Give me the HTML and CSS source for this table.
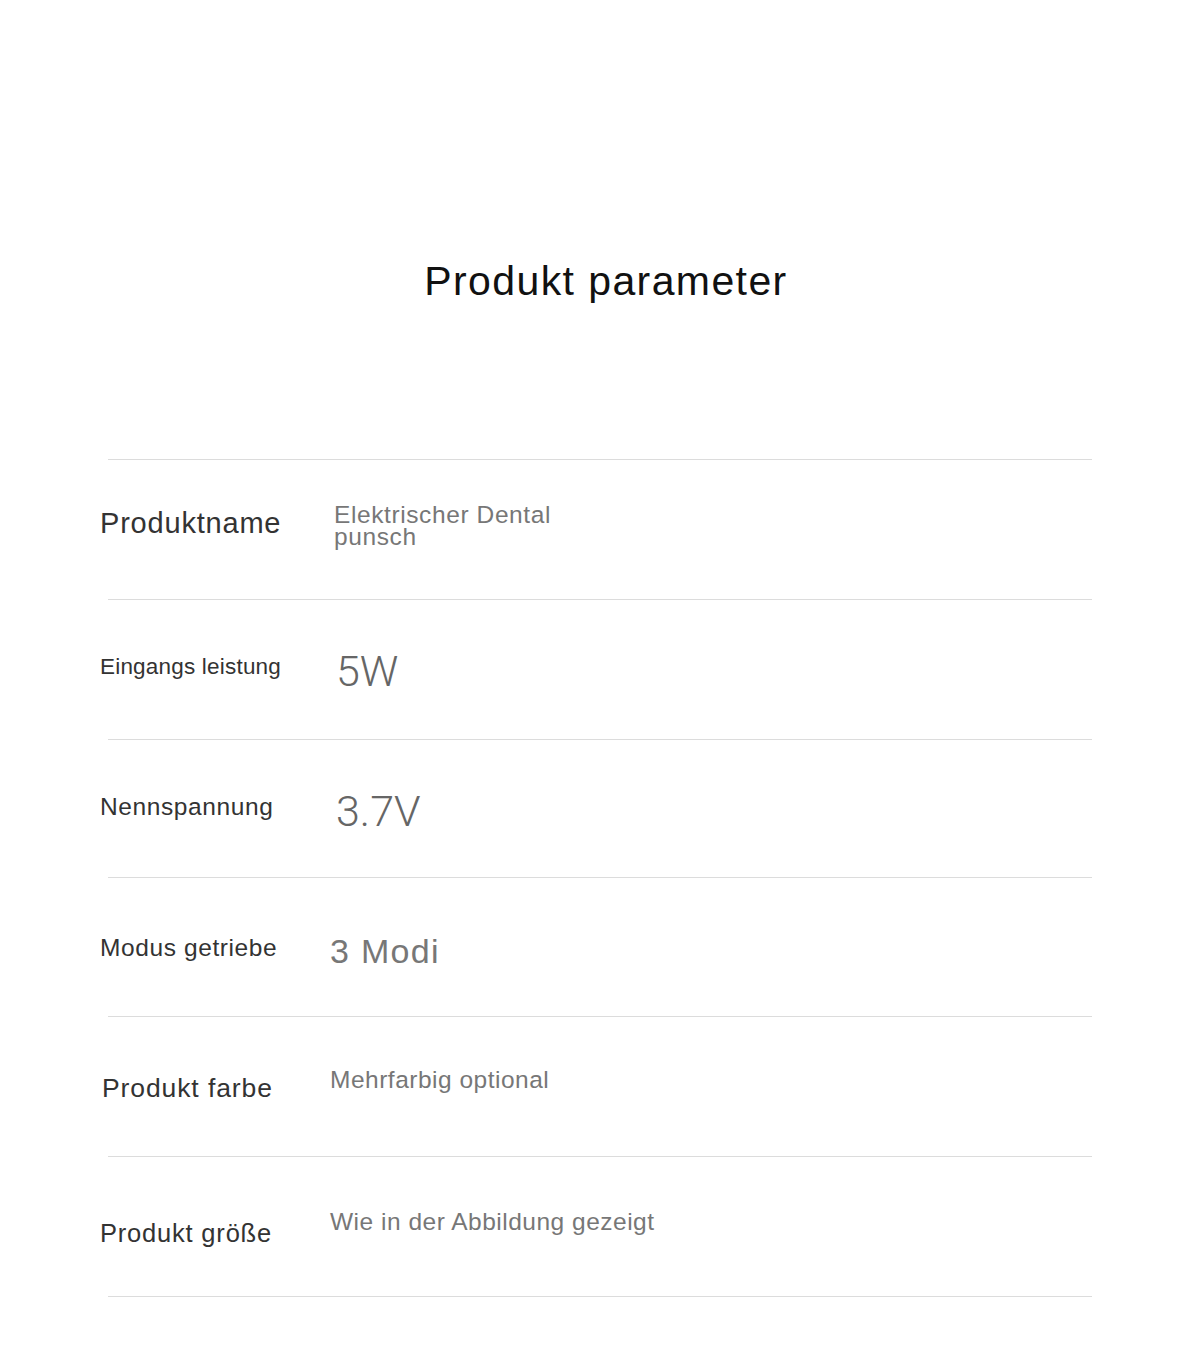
FILE: index.html
```html
<!DOCTYPE html>
<html lang="de">
<head>
    <meta charset="UTF-8">
    <meta name="viewport" content="width=device-width, initial-scale=1.0">
    <title>Produkt parameter</title>
    <link rel="stylesheet" href="styles.css">
</head>
<body>
    <h1 class="title">Produkt parameter</h1>

    <div class="params">
        <!-- Row 1 -->
        <div class="row row-1">
            <div class="label">Produktname</div>
            <div class="value">Elektrischer Dental punsch</div>
        </div>

        <!-- Row 2 -->
        <div class="row row-2">
            <div class="label">Eingangs leistung</div>
            <div class="value big">5W</div>
        </div>

        <!-- Row 3 -->
        <div class="row row-3">
            <div class="label">Nennspannung</div>
            <div class="value big">3.7V</div>
        </div>

        <!-- Row 4 -->
        <div class="row row-4">
            <div class="label">Modus getriebe</div>
            <div class="value">3 Modi</div>
        </div>

        <!-- Row 5 -->
        <div class="row row-5">
            <div class="label">Produkt farbe</div>
            <div class="value">Mehrfarbig optional</div>
        </div>

        <!-- Row 6 -->
        <div class="row row-6">
            <div class="label">Produkt größe</div>
            <div class="value">Wie in der Abbildung gezeigt</div>
        </div>
    </div>
</body>
</html>
```

FILE: styles.css
```css
body {
    margin: 0;
    padding: 0;
    background-color: #fff;
    font-family: "Liberation Sans", Arial, sans-serif;
}

.title {
    margin: 0;
    padding: 257px 0 0 12px;
    font-size: 41px;
    font-weight: normal;
    line-height: 1.2;
    letter-spacing: 1.4px;
    text-align: center;
    color: #111;
}

.params {
    width: 984px;
    margin: 153px auto 0;
    border-bottom: 1px solid #dcdcdc;
}

.row {
    display: flex;
    align-items: flex-start;
    height: 140px;
    box-sizing: border-box;
    border-top: 1px solid #dcdcdc;
}

.label {
    flex: 0 0 230px;
    margin-left: -8px;
    line-height: 1.2;
    color: #333;
    white-space: nowrap;
}

.value {
    line-height: 1.2;
    color: #777;
}

.value.big {
    font-family: Roboto, "Liberation Sans", sans-serif;
    font-weight: 300;
    font-size: 43px;
    color: #666;
    padding-left: 6px;
}

/* row by row tuning */
.row-1 .label { font-size: 29px; letter-spacing: 0.8px; padding-top: 46px; }
.row-1 .value {
    font-size: 24.5px;
    letter-spacing: 0.6px;
    line-height: 22px;
    width: 235px;
    padding-top: 44px;
    padding-left: 4px;
}

.row-2 .label { font-size: 22.5px; letter-spacing: 0.2px; padding-top: 53px; }
.row-2 .value { padding-top: 46px; }

.row-3 { height: 138px; }
.row-3 .label { font-size: 24.5px; letter-spacing: 0.6px; padding-top: 52px; }
.row-3 .value { padding-top: 46px; }

.row-4 { height: 139px; }
.row-4 .label { font-size: 24.5px; letter-spacing: 0.6px; padding-top: 55px; }
.row-4 .value { font-size: 34px; letter-spacing: 1.3px; padding-top: 53px; }

.row-5 .label { font-size: 26.5px; letter-spacing: 0.9px; padding-top: 56px; margin-left: -6px; flex-basis: 228px; }
.row-5 .value { font-size: 24.5px; letter-spacing: 0.5px; padding-top: 48px; }

.row-6 .label { font-size: 25.5px; letter-spacing: 0.8px; padding-top: 61px; }
.row-6 .value { font-size: 24.5px; letter-spacing: 0.5px; padding-top: 50px; }
```
